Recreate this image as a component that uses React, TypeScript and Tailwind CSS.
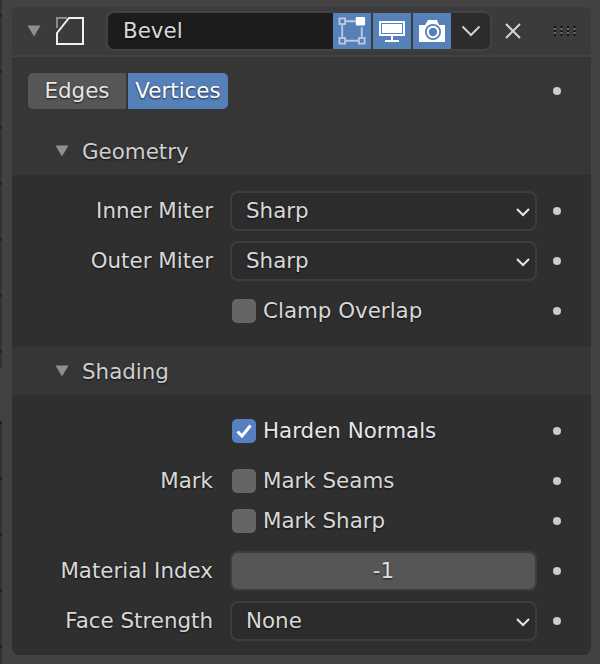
const shadow = "[text-shadow:0_1px_2px_rgba(0,0,0,0.7)]";

function Dot() {
  return (
    <div className="flex w-[54px] shrink-0 items-center pl-[16px]">
      <span className="h-2 w-2 rounded-full bg-[#cccccc]" />
    </div>
  );
}

function Triangle() {
  return (
    <svg width="14" height="12" viewBox="0 0 14 12" className="shrink-0">
      <path d="M0.5 0.5 H13.5 L7 11.5 Z" fill="#8f8f8f" />
    </svg>
  );
}

function Row({ label, children }: { label?: string; children: React.ReactNode }) {
  return (
    <div className="flex h-10 items-center">
      <div className={`w-[201px] shrink-0 text-right text-[#d8d8d8] ${shadow}`}>{label}</div>
      <div className="ml-[17px] flex-1">{children}</div>
      <Dot />
    </div>
  );
}

function Select({ value }: { value: string }) {
  return (
    <div className="flex h-10 w-[307px] items-center justify-between rounded-lg border-2 border-[#3d3d3d] bg-[#2c2c2c] pr-[5px] pl-[14px] text-[#d8d8d8]">
      <span className={shadow}>{value}</span>
      <svg width="14" height="12" viewBox="0 0 14 12">
        <path d="M1 4 L7 10 L13 4" fill="none" stroke="#e6e6e6" strokeWidth="2" />
      </svg>
    </div>
  );
}

function Check({ label, checked }: { label: string; checked?: boolean }) {
  return (
    <div className="flex items-center gap-[7px] pl-[2px]">
      <div className={`flex h-6 w-6 items-center justify-center rounded-[5px] ${checked ? "bg-[#5680c2]" : "bg-[#656565]"}`}>
        {checked && (
          <svg width="18" height="16" viewBox="0 0 18 16">
            <path d="M2.5 8.5 L7 13 L15.5 2.5" fill="none" stroke="#ffffff" strokeWidth="3" />
          </svg>
        )}
      </div>
      <span className={`${checked ? "text-[#e6e6e6]" : "text-[#d8d8d8]"} ${shadow}`}>{label}</span>
    </div>
  );
}

function SubHeader({ title }: { title: string }) {
  return (
    <div className="flex h-12 items-center bg-[#363636] pl-[43px]">
      <Triangle />
      <span className={`ml-[13px] pt-[2px] text-[#cfcfcf] ${shadow}`}>{title}</span>
    </div>
  );
}

function ModIcon() {
  return (
    <svg width="28" height="28" viewBox="0 0 28 28" className="ml-[15px] shrink-0">
      <path d="M1 11 V1 H11" fill="none" stroke="#8a8a8a" strokeWidth="2" />
      <path d="M1 16 V27 H27 V1 H13 Z" fill="none" stroke="#f0f0f0" strokeWidth="2" />
    </svg>
  );
}

function EditIcon() {
  return (
    <svg width="28" height="28" viewBox="0 0 30 30">
      <path d="M8 4.5 H19 M4.5 8 V22 M8 25.5 H22 M25.5 11 V22" stroke="#b9c9e4" strokeWidth="2" fill="none" />
      <rect x="1.5" y="1.5" width="6" height="6" fill="none" stroke="#b9c9e4" strokeWidth="2" />
      <rect x="1.5" y="22.5" width="6" height="6" fill="none" stroke="#b9c9e4" strokeWidth="2" />
      <rect x="22.5" y="22.5" width="6" height="6" fill="none" stroke="#b9c9e4" strokeWidth="2" />
      <rect x="19" y="0" width="10" height="9" rx="1" fill="#ffffff" />
    </svg>
  );
}

function ViewportIcon() {
  return (
    <svg width="26" height="21" viewBox="0 0 26 21">
      <rect x="0" y="0" width="26" height="15" fill="#ffffff" />
      <rect x="2" y="2" width="22" height="11" fill="#5680b8" />
      <rect x="3" y="3" width="20" height="9" fill="#ffffff" />
      <rect x="12" y="15" width="2" height="4" fill="#ffffff" />
      <rect x="6" y="19" width="14" height="2" fill="#ffffff" />
    </svg>
  );
}

function CameraIcon() {
  return (
    <svg width="26" height="22" viewBox="0 0 26 22">
      <path d="M0 5 H6 L9 0 H18 L20 5 H26 V22 H0 Z" fill="#ffffff" />
      <circle cx="14" cy="12" r="8" fill="#5680b8" />
      <circle cx="14" cy="12" r="6.2" fill="#ffffff" />
      <circle cx="14" cy="12" r="4.2" fill="#5680b8" />
    </svg>
  );
}

function BlueToggle({ children }: { children: React.ReactNode }) {
  return <div className="flex h-9 w-[38px] items-center justify-center bg-[#5680b8]">{children}</div>;
}

function Header() {
  return (
    <div className="flex h-[50px] items-center border-b-2 border-[#424242] bg-[#3b3b3b]">
      <div className="ml-[15px]">
        <Triangle />
      </div>
      <ModIcon />
      <div className="ml-[22px] flex h-[40px] w-[227px] items-center rounded-l-lg border-y-2 border-l-2 border-[#424242] bg-[#1c1c1c] pl-[15px] text-[#d8d8d8]">
        <span className={shadow}>Bevel</span>
      </div>
      <div className="flex h-[40px] items-center gap-[2px] border-y-2 border-[#3d3d3d] bg-[#3d3d3d]">
        <BlueToggle><EditIcon /></BlueToggle>
        <BlueToggle><ViewportIcon /></BlueToggle>
        <BlueToggle><CameraIcon /></BlueToggle>
      </div>
      <div className="flex h-[40px] w-[41px] items-center justify-center rounded-r-lg border-y-2 border-r-2 border-[#424242] bg-[#2c2c2c]">
        <svg width="20" height="12" viewBox="0 0 20 12">
          <path d="M1.5 1.5 L10 10 L18.5 1.5" fill="none" stroke="#d0d0d0" strokeWidth="2" />
        </svg>
      </div>
      <svg width="18" height="18" viewBox="0 0 18 18" className="ml-[12px]">
        <path d="M2 2 L16 16 M16 2 L2 16" stroke="#d4d4d4" strokeWidth="2" />
      </svg>
      <svg width="22" height="12" viewBox="0 0 22 12" className="ml-[32px]">
        <path d="M1 1 V11 M7.5 1 V11 M14 1 V11 M20.5 1 V11" stroke="#111111" strokeWidth="2" strokeDasharray="2 2" />
        <path d="M1 3 V11 M7.5 3 V11 M14 3 V11 M20.5 3 V11" stroke="#6a6a6a" strokeWidth="2" strokeDasharray="2 2" />
      </svg>
    </div>
  );
}

export default function App() {
  return (
    <div className="flex h-[664px] w-[600px] overflow-hidden bg-[#424242] font-['DejaVu_Sans',sans-serif] text-[21.4px] leading-none">
      <div className="w-[2px] shrink-0">
        <div className="h-[368px] bg-[repeating-linear-gradient(to_bottom,#333333_0px,#333333_14px,#222222_14px,#222222_17px,#333333_17px,#333333_56px)]" />
        <div className="mt-[53px] h-[243px] bg-[repeating-linear-gradient(to_bottom,#222222_0px,#222222_3px,#333333_3px,#333333_56px)]" />
      </div>
      <div className="mt-[7px] ml-[10px] h-[648px] w-[579px] overflow-hidden rounded-lg bg-[#363636]">
        <Header />
        <div className="flex h-[70px] items-center pb-[2px]">
          <div className={`ml-[16px] flex h-9 w-[200px] text-[#e6e6e6] ${shadow}`}>
            <div className="flex w-[98px] items-center justify-center rounded-l-[5px] bg-[#565656]">Edges</div>
            <div className="ml-[2px] flex flex-1 items-center justify-center rounded-r-[5px] bg-[#5680b8] text-white">Vertices</div>
          </div>
          <div className="ml-[309px]">
            <Dot />
          </div>
        </div>
        <SubHeader title="Geometry" />
        <div className="flex flex-col gap-[10px] bg-[#2f2f2f] py-4">
          <Row label="Inner Miter"><Select value="Sharp" /></Row>
          <Row label="Outer Miter"><Select value="Sharp" /></Row>
          <Row><Check label="Clamp Overlap" /></Row>
        </div>
        <SubHeader title="Shading" />
        <div className="bg-[#2f2f2f] pt-4 pb-[14px]">
          <Row><Check label="Harden Normals" checked /></Row>
          <div className="mt-[10px]">
            <Row label="Mark"><Check label="Mark Seams" /></Row>
            <Row><Check label="Mark Sharp" /></Row>
          </div>
          <div className="mt-[10px] flex flex-col gap-[10px]">
            <Row label="Material Index">
              <div className={`flex h-10 w-[307px] items-center justify-center rounded-lg border-2 border-[#3d3d3d] bg-[#565656] text-[#e0e0e0] ${shadow}`}>-1</div>
            </Row>
            <Row label="Face Strength"><Select value="None" /></Row>
          </div>
        </div>
      </div>
    </div>
  );
}
